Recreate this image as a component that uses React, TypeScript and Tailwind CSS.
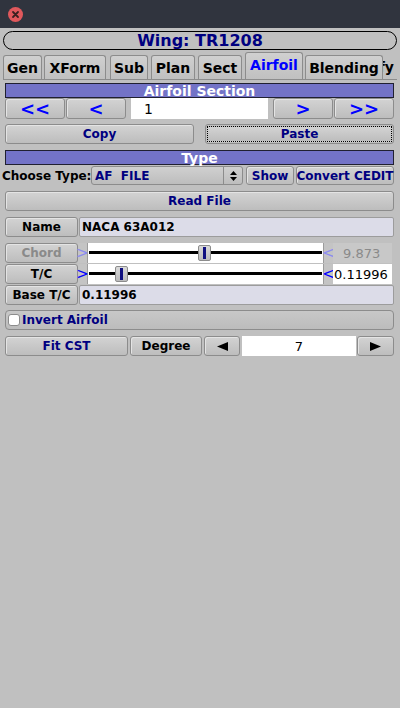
import React from 'react';
import clsx from 'clsx';

const font = { fontFamily: '"DejaVu Sans", "Liberation Sans", sans-serif' };

function Btn({ children, className }: { children?: React.ReactNode; className?: string }) {
  return (
    <div
      className={clsx(
        'flex items-center justify-center rounded-[3px] border border-[#8c8c8c] bg-gradient-to-b from-[#d3d3d3] to-[#bdbdbd] text-[12px] font-bold leading-none shadow-[inset_1px_1px_0_#e4e4e4]',
        className
      )}
    >
      {children}
    </div>
  );
}

function Header({ label, className }: { label: string; className?: string }) {
  return (
    <div
      className={clsx(
        'flex h-[15px] items-center justify-center border border-[#202030] bg-[#7373c7] text-[14px] font-bold leading-none text-white',
        className
      )}
    >
      {label}
    </div>
  );
}

function Tri({ dir }: { dir: 'l' | 'r' }) {
  return (
    <svg width="11" height="9" viewBox="0 0 11 9">
      {dir === 'l' ? <polygon points="0,4.5 11,0 11,9" fill="#000" /> : <polygon points="11,4.5 0,0 0,9" fill="#000" />}
    </svg>
  );
}

function SliderRow({ label, pos, value, disabled }: { label: string; pos: number; value: string; disabled?: boolean }) {
  const arrow = disabled ? 'text-[#8c8cf0]' : 'text-[#0000ff]';
  return (
    <div className="flex h-[20px]">
      <Btn className={clsx('w-[73px]', disabled ? 'text-[#8a8a8a]' : 'text-black')}>{label}</Btn>
      <div className={clsx('flex w-[10px] items-center justify-center border-r border-[#9c9c9c] bg-[#c4c4c4] text-[15px] leading-none', arrow)}>&gt;</div>
      <div className="relative w-[235px] bg-white">
        <div className="absolute left-[1px] right-[1px] top-[8px] h-[3px] bg-black" />
        <div
          className="absolute top-[2px] flex h-[16px] w-[13px] items-center justify-center rounded-[2px] border border-[#8c8c8c] bg-gradient-to-b from-[#dadada] to-[#bcbcbc]"
          style={{ left: pos }}
        >
          <div className="h-[12px] w-[3px] bg-[#101080]" />
        </div>
      </div>
      <div className={clsx('flex w-[10px] items-center justify-center border-l border-[#9c9c9c] bg-[#c4c4c4] text-[15px] leading-none', arrow)}>&lt;</div>
      <div
        className={clsx(
          'flex w-[59px] items-center text-[13px] leading-none',
          disabled ? 'bg-[#c8c8c8] pl-[10px] text-[#8a8a8a]' : 'bg-white pl-[1px] text-black'
        )}
      >
        {value}
      </div>
    </div>
  );
}

const tabs = [
  { name: 'Gen', w: 39, ml: 0 },
  { name: 'XForm', w: 62, ml: 2 },
  { name: 'Sub', w: 38, ml: 4 },
  { name: 'Plan', w: 44, ml: 3 },
  { name: 'Sect', w: 44, ml: 3 },
  { name: 'Airfoil', w: 58, ml: 3 },
  { name: 'Blending', w: 78, ml: 2 },
];

export default function App() {
  return (
    <div className="flex h-[708px] w-[400px] flex-col overflow-hidden bg-[#c0c0c0]" style={font}>
      {/* Window title bar */}
      <div className="flex h-[28px] shrink-0 items-center bg-[#30343e] pl-[8px]">
        <svg width="15" height="15" viewBox="0 0 15 15">
          <circle cx="7.5" cy="7.5" r="7.5" fill="#e0585c" />
          <path d="M5 5 L10 10 M10 5 L5 10" stroke="#3a2020" strokeWidth="1.8" strokeLinecap="round" />
        </svg>
      </div>

      <div className="px-[3px]">
        <div className="mt-[3px] flex h-[19px] items-center justify-center rounded-full border border-black text-[16px] font-bold leading-none text-[#000080]">
          Wing: TR1208
        </div>

        {/* Tabs */}
        <div className="mt-[2px] flex h-[27px] items-end">
          {tabs.map(t => {
            const sel = t.name === 'Airfoil';
            return (
              <div
                key={t.name}
                className={clsx(
                  'flex items-center justify-center rounded-t-[3px] border border-b-0 border-[#8c8c8c] bg-gradient-to-b from-[#d0d0d0] to-[#c0c0c0] text-[14px] font-bold leading-none',
                  sel ? 'h-[27px] pb-[2px] text-[#0000ff]' : 'h-[24px] text-black'
                )}
                style={{ width: t.w, marginLeft: t.ml }}
              >
                {t.name}
              </div>
            );
          })}
          <div className="flex h-[24px] w-[11px] items-center justify-end overflow-hidden text-[14px] font-bold leading-none text-black">
            <span className="shrink-0">fy</span>
          </div>
        </div>
      </div>

      {/* Tab panel */}
      <div className="mx-[3px] flex flex-col border-t border-[#8c8c8c] px-[2px] pr-[3px]">
        <Header label="Airfoil Section" className="mt-[3px]" />
        <div className="flex h-[21px] text-[18px] text-[#0000ff]">
          <Btn className="w-[60px] text-[18px] text-[#0000ff]">&lt;&lt;</Btn>
          <Btn className="ml-[1px] w-[60px] text-[18px] text-[#0000ff]">&lt;</Btn>
          <div className="ml-[5px] flex w-[137px] items-center bg-white pl-[13px] text-[14px] leading-none text-black">1</div>
          <Btn className="ml-[5px] w-[60px] text-[18px] text-[#0000ff]">&gt;</Btn>
          <Btn className="ml-[1px] w-[60px] text-[18px] text-[#0000ff]">&gt;&gt;</Btn>
        </div>

        <div className="mt-[5px] flex h-[20px]">
          <Btn className="w-[189px] text-[#000080]">Copy</Btn>
          <div className="ml-[11px] flex w-[189px] rounded-[3px] border border-[#8c8c8c] p-[1px]">
            <div className="flex flex-1 items-center justify-center border border-dotted border-black bg-gradient-to-b from-[#d3d3d3] to-[#bdbdbd] text-[12px] font-bold leading-none text-[#000080]">
              Paste
            </div>
          </div>
        </div>

        <Header label="Type" className="mt-[6px]" />
        <div className="-ml-[3px] mt-[1px] flex h-[19px]">
          <div className="flex w-[89px] items-center whitespace-nowrap text-[12px] font-bold leading-none text-black">Choose Type:</div>
          <div className="flex w-[152px] rounded-[3px] border border-[#8c8c8c] bg-gradient-to-b from-[#d0d0d0] to-[#bdbdbd]">
            <div className="flex flex-1 items-center pl-[3px] text-[12px] font-bold leading-none text-[#000080]">AF&nbsp;&nbsp;FILE</div>
            <div className="flex w-[19px] items-center justify-center border-l border-[#8c8c8c]">
              <svg width="7" height="12" viewBox="0 0 7 12">
                <polygon points="3.5,1 7,5 0,5" fill="#000" />
                <polygon points="3.5,11 7,7 0,7" fill="#000" />
              </svg>
            </div>
          </div>
          <Btn className="ml-[3px] w-[48px] text-[#000080]">Show</Btn>
          <Btn className="ml-[2px] w-[98px] whitespace-nowrap text-[#000080]">Convert CEDIT</Btn>
        </div>

        <Btn className="mt-[6px] h-[20px] text-[#000080]">Read File</Btn>

        <div className="mt-[6px] flex h-[20px]">
          <Btn className="w-[73px] text-black">Name</Btn>
          <div className="ml-[1px] flex flex-1 items-center rounded-[2px] border border-[#9c9c9c] bg-[#dcdce8] pl-[2px] text-[12px] font-bold leading-none text-black">
            NACA 63A012
          </div>
        </div>

        <div className="mt-[6px]">
          <SliderRow label="Chord" pos={110} value="9.873" disabled />
        </div>
        <div className="mt-[1px]">
          <SliderRow label="T/C" pos={27} value="0.11996" />
        </div>

        <div className="mt-[1px] flex h-[20px]">
          <Btn className="w-[73px] text-black">Base T/C</Btn>
          <div className="ml-[1px] flex flex-1 items-center rounded-[2px] border border-[#9c9c9c] bg-[#dcdce8] pl-[2px] text-[12px] font-bold leading-none text-black">
            0.11996
          </div>
        </div>

        <div className="mt-[5px] flex h-[20px] items-center rounded-[4px] border border-[#8c8c8c] bg-gradient-to-b from-[#c8c8c8] to-[#bcbcbc] pl-[2px]">
          <div className="h-[12px] w-[12px] rounded-[3px] border border-[#8c8c8c] bg-white" />
          <span className="ml-[2px] text-[12px] font-bold leading-none text-[#000080]">Invert Airfoil</span>
        </div>

        <div className="mt-[6px] flex h-[20px]">
          <Btn className="w-[123px] text-[#000080]">Fit CST</Btn>
          <Btn className="ml-[2px] w-[72px] text-black">Degree</Btn>
          <Btn className="ml-[2px] w-[36px]">
            <Tri dir="l" />
          </Btn>
          <div className="ml-[2px] flex w-[114px] items-center justify-center bg-white text-[13px] leading-none text-black">7</div>
          <Btn className="ml-[1px] flex-1">
            <Tri dir="r" />
          </Btn>
        </div>
      </div>
    </div>
  );
}
